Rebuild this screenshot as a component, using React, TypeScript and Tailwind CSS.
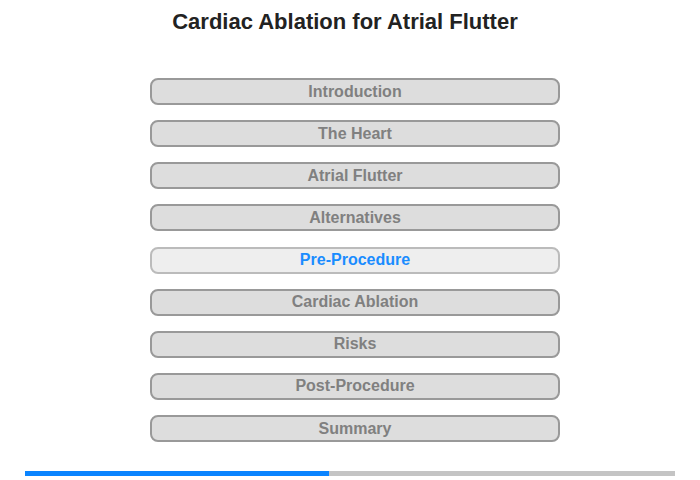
import React from "react";

const items = [
  "Introduction",
  "The Heart",
  "Atrial Flutter",
  "Alternatives",
  "Pre-Procedure",
  "Cardiac Ablation",
  "Risks",
  "Post-Procedure",
  "Summary",
];

export default function App() {
  return (
    <div
      className="w-[700px] h-[480px] bg-white flex flex-col items-center"
      style={{ fontFamily: '"Liberation Sans", Arial, sans-serif' }}
    >
      <h1 className="mt-[8px] pr-[10px] text-[22px] leading-[28px] font-bold text-[#222222]">
        Cardiac Ablation for Atrial Flutter
      </h1>
      <div className="mt-[42px] pl-[10px] flex flex-col gap-[15.125px]">
        {items.map((t) => {
          const active = t === "Pre-Procedure";
          return (
            <div
              key={t}
              className={
                active
                  ? "w-[410px] h-[27px] rounded-[8px] border-2 border-[#bbbbbb] bg-[#eeeeee] flex items-center justify-center text-[16px] font-bold text-[#1a8cff]"
                  : "w-[410px] h-[27px] rounded-[8px] border-2 border-[#999999] bg-[#dddddd] flex items-center justify-center text-[16px] font-bold text-[#808080]"
              }
            >
              {t}
            </div>
          );
        })}
      </div>
      <div className="mt-[29px] w-[650px] h-[5px] flex bg-[#c4c4c4]">
        <div className="w-[304px] h-full bg-[#0a84ff]" />
      </div>
    </div>
  );
}
